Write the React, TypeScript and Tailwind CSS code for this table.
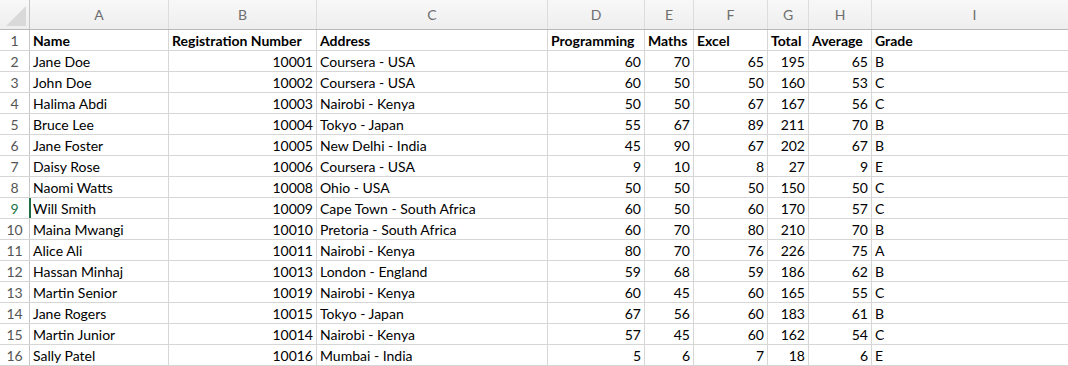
import React from 'react';

const columns = [
    { key: 'A', width: 'w-[139px]' },
    { key: 'B', width: 'w-[148px]' },
    { key: 'C', width: 'w-[231px]' },
    { key: 'D', width: 'w-[97px]' },
    { key: 'E', width: 'w-[49px]' },
    { key: 'F', width: 'w-[74px]' },
    { key: 'G', width: 'w-[41px]' },
    { key: 'H', width: 'w-[63px]' },
    { key: 'I', width: 'w-[206px]' },
];

// name, reg, address, programming, maths, excel, total, average, grade
const rows: (string | number)[][] = [
    ['Jane Doe', 10001, 'Coursera - USA', 60, 70, 65, 195, 65, 'B'],
    ['John Doe', 10002, 'Coursera - USA', 60, 50, 50, 160, 53, 'C'],
    ['Halima Abdi', 10003, 'Nairobi - Kenya', 50, 50, 67, 167, 56, 'C'],
    ['Bruce Lee', 10004, 'Tokyo - Japan', 55, 67, 89, 211, 70, 'B'],
    ['Jane Foster', 10005, 'New Delhi - India', 45, 90, 67, 202, 67, 'B'],
    ['Daisy Rose', 10006, 'Coursera - USA', 9, 10, 8, 27, 9, 'E'],
    ['Naomi Watts', 10008, 'Ohio - USA', 50, 50, 50, 150, 50, 'C'],
    ['Will Smith', 10009, 'Cape Town - South Africa', 60, 50, 60, 170, 57, 'C'],
    ['Maina Mwangi', 10010, 'Pretoria - South Africa', 60, 70, 80, 210, 70, 'B'],
    ['Alice Ali', 10011, 'Nairobi - Kenya', 80, 70, 76, 226, 75, 'A'],
    ['Hassan Minhaj', 10013, 'London - England', 59, 68, 59, 186, 62, 'B'],
    ['Martin Senior', 10019, 'Nairobi - Kenya', 60, 45, 60, 165, 55, 'C'],
    ['Jane Rogers', 10015, 'Tokyo - Japan', 67, 56, 60, 183, 61, 'B'],
    ['Martin Junior', 10014, 'Nairobi - Kenya', 57, 45, 60, 162, 54, 'C'],
    ['Sally Patel', 10016, 'Mumbai - India', 5, 6, 7, 18, 6, 'E'],
];

const headers = ['Name', 'Registration Number', 'Address', 'Programming', 'Maths', 'Excel', 'Total', 'Average', 'Grade'];

export default function App() {
    return (
        <div className="w-[1068px] h-[366px] overflow-hidden bg-white text-[14px] text-black" style={{ fontFamily: 'Lato, "Liberation Sans", sans-serif' }}>
            {/* Column letters */}
            <div className="flex h-[30px] bg-gradient-to-b from-[#f8f8f8] to-[#eeeeee] border-b border-[#b9b9b9]">
                <div className="w-[30px] shrink-0 border-r border-[#c6c6c6] flex items-end justify-end p-[3px]">
                    <svg width="20" height="20" viewBox="0 0 20 20">
                        <polygon points="20,0 20,20 0,20" fill="#d9d9d9" />
                    </svg>
                </div>
                {columns.map((c) => (
                    <div key={c.key} className={`${c.width} shrink-0 border-r border-[#dcdcdc] flex items-center justify-center text-[14px] text-[#6e6e6e]`}>
                        {c.key}
                    </div>
                ))}
            </div>

            {/* Header row */}
            <div className="flex h-[21px] border-b border-[#d6d6d6]">
                <div className="w-[30px] shrink-0 border-r border-[#c6c6c6] flex items-center justify-center text-[#555]">1</div>
                {headers.map((h, i) => (
                    <div key={h} className={`${columns[i].width} shrink-0 border-r border-[#d6d6d6] flex items-center px-[3px] font-bold whitespace-nowrap`}>
                        {h}
                    </div>
                ))}
            </div>

            {rows.map((r, ri) => {
                const active = ri + 2 === 9;
                return (
                    <div key={ri} className="flex h-[21px] border-b border-[#d6d6d6]">
                        <div className={`w-[30px] shrink-0 border-r flex items-center justify-center ${active ? 'text-[#217346] border-[#1e6e43]' : 'text-[#555] border-[#c6c6c6]'}`}>
                            {ri + 2}
                        </div>
                        {r.map((v, ci) => (
                            <div
                                key={ci}
                                className={`relative ${columns[ci].width} shrink-0 border-r border-[#d6d6d6] flex items-center px-[3px] whitespace-nowrap ${typeof v === 'number' ? 'justify-end' : 'justify-start'}`}
                            >
                                {active && ci === 0 && <span className="absolute left-0 top-0 bottom-0 w-[1px] bg-[#1e6e43]" />}
                                {v}
                            </div>
                        ))}
                    </div>
                );
            })}
        </div>
    );
}
